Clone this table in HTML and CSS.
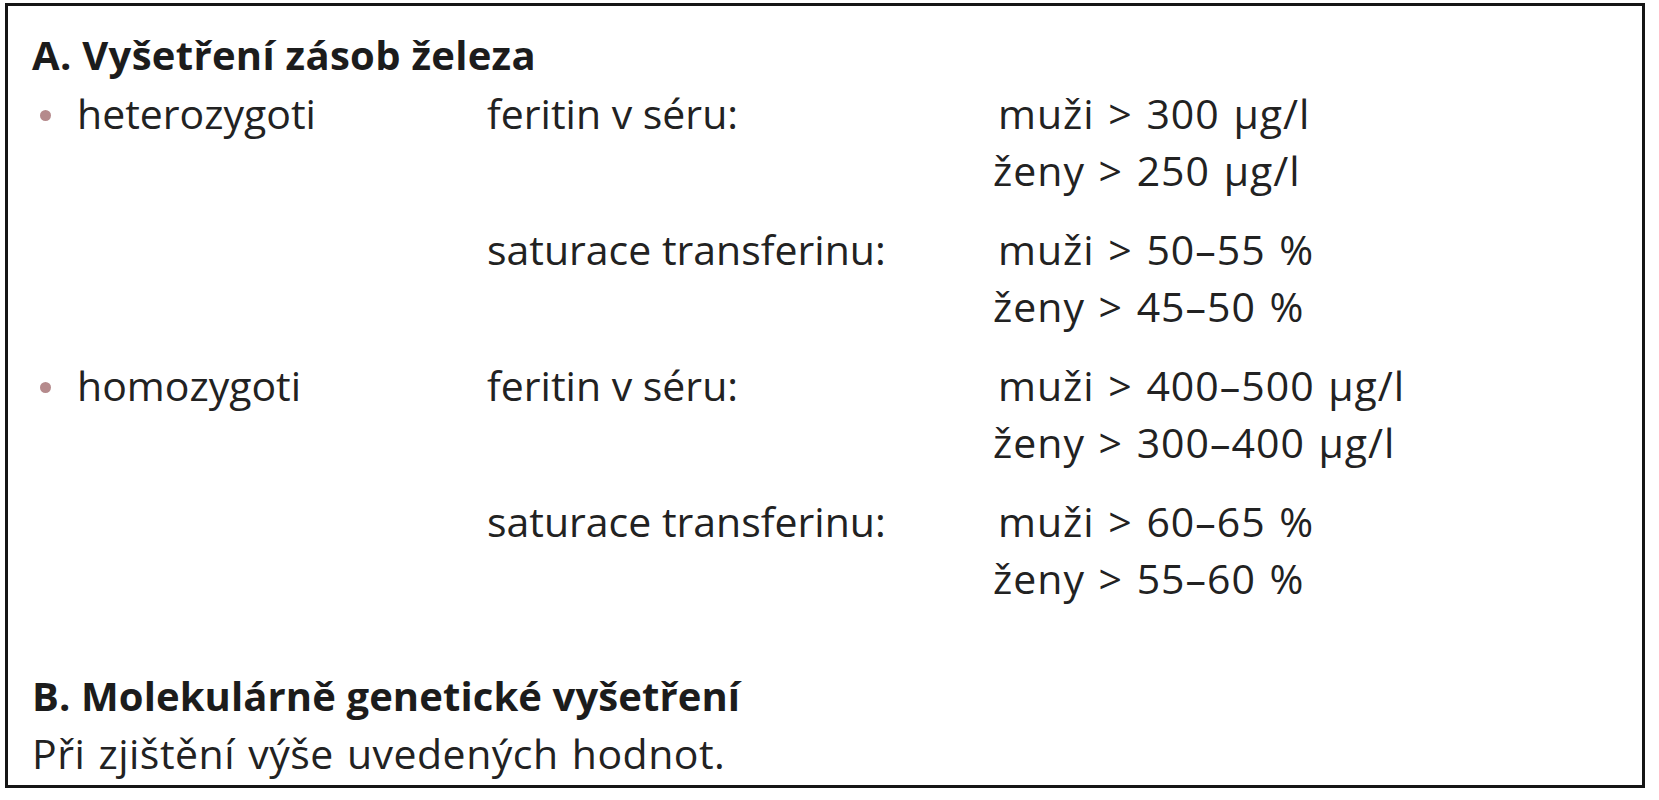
FILE: index.html
```html
<!DOCTYPE html>
<html lang="cs">
<head>
<meta charset="utf-8">
<title>Vyšetření zásob železa</title>
<link rel="stylesheet" href="styles.css">
</head>
<body>
<div class="box">
  <h2 class="heading">A. Vyšetření zásob železa</h2>
  <div class="group">
    <span class="bullet"></span>
    <span class="term">heterozygoti</span>
    <span class="param">feritin v séru:</span>
    <span class="values"><span class="muz">muži &gt; 300 µg/l</span><span>ženy &gt; 250 µg/l</span></span>
  </div>
  <div class="group">
    <span class="bullet empty"></span>
    <span class="term"></span>
    <span class="param">saturace transferinu:</span>
    <span class="values"><span class="muz">muži &gt; 50–55 %</span><span>ženy &gt; 45–50 %</span></span>
  </div>
  <div class="group">
    <span class="bullet"></span>
    <span class="term">homozygoti</span>
    <span class="param">feritin v séru:</span>
    <span class="values"><span class="muz">muži &gt; 400–500 µg/l</span><span>ženy &gt; 300–400 µg/l</span></span>
  </div>
  <div class="group">
    <span class="bullet empty"></span>
    <span class="term"></span>
    <span class="param">saturace transferinu:</span>
    <span class="values"><span class="muz">muži &gt; 60–65 %</span><span>ženy &gt; 55–60 %</span></span>
  </div>
  <h2 class="heading heading-b">B. Molekulárně genetické vyšetření</h2>
  <p class="text">Při zjištění výše uvedených hodnot.</p>
</div>
</body>
</html>
```

FILE: styles.css
```css
html, body {
  margin: 0;
  padding: 0;
  background: #ffffff;
}

body {
  font-family: "Open Sans", "Noto Sans", "DejaVu Sans", sans-serif;
  color: #222222;
  font-size: 41px;
  line-height: 57px;
}

.box {
  box-sizing: border-box;
  width: 1640px;
  margin: 3px 0 0 5px;
  border: 3px solid #151515;
  padding: 20px 24px 3px 24px;
}

.heading {
  margin: 0 0 2px 0;
  font-size: 40px;
  font-weight: 700;
  letter-spacing: 0.3px;
  line-height: 57px;
  color: #1c1c1c;
}

.heading-b {
  margin-top: 60px;
  margin-bottom: 1px;
  letter-spacing: 0.1px;
}

.group {
  display: grid;
  grid-template-columns: 45px 410px 506px 1fr;
  align-items: start;
  margin-bottom: 22px;
}

.group:last-of-type {
  margin-bottom: 0;
}

.bullet {
  display: flex;
  align-items: center;
  justify-content: flex-start;
  height: 57px;
  padding-left: 8px;
}

.bullet::before {
  content: "";
  display: block;
  width: 11px;
  height: 11px;
  border-radius: 50%;
  background: #b58a8c;
  margin-top: 3px;
}

.bullet.empty::before {
  display: none;
}

.values {
  display: flex;
  flex-direction: column;
  word-spacing: 2px;
  letter-spacing: 1px;
}

.muz {
  padding-left: 5px;
}

.text {
  margin: 0;
  word-spacing: 2px;
  letter-spacing: 0.5px;
}
```
